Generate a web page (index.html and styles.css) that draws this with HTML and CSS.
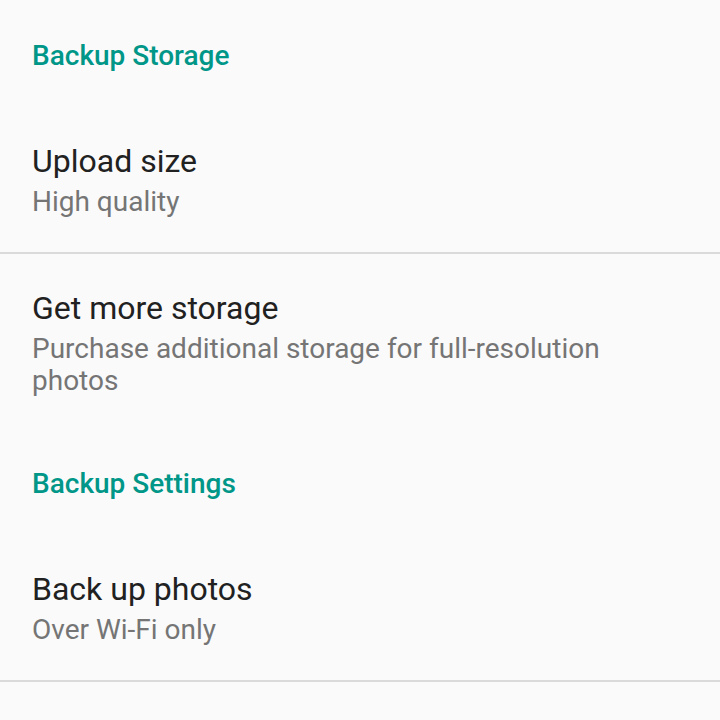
FILE: index.html
```html
<!DOCTYPE html>
<html lang="en">
<head>
    <meta charset="UTF-8">
    <meta name="viewport" content="width=device-width, initial-scale=1.0">
    <title>Backup settings</title>
    <link rel="stylesheet" href="styles.css">
</head>
<body>
    <main class="settings">
        <section class="pref-group">
            <h2 class="pref-category">Backup Storage</h2>
            <div class="pref-item pref-divided">
                <div class="pref-title">Upload size</div>
                <div class="pref-summary">High quality</div>
            </div>
            <div class="pref-item pref-last">
                <div class="pref-title">Get more storage</div>
                <div class="pref-summary">Purchase additional storage for full-resolution photos</div>
            </div>
        </section>
        <section class="pref-group">
            <h2 class="pref-category">Backup Settings</h2>
            <div class="pref-item pref-divided">
                <div class="pref-title">Back up photos</div>
                <div class="pref-summary">Over Wi-Fi only</div>
            </div>
        </section>
    </main>
</body>
</html>
```

FILE: styles.css
```css
body {
    margin: 0;
    padding: 0;
    background: #fafafa;
    font-family: Roboto, 'Noto Sans', sans-serif;
}
.settings {
    padding-top: 5px;
}
.pref-category {
    margin: 0;
    padding: 35px 32px;
    font-size: 28px;
    line-height: 32px;
    font-weight: 500;
    color: #009688;
}
.pref-item {
    padding: 34px 32px;
}
.pref-last {
    padding-bottom: 36px;
}
.pref-divided {
    border-bottom: 2px solid #dadada;
}
.pref-title {
    font-size: 32px;
    line-height: 40px;
    color: #212121;
}
.pref-summary {
    margin-top: 5px;
    padding-right: 64px;
    font-size: 28px;
    line-height: 32px;
    color: #757575;
}
```
